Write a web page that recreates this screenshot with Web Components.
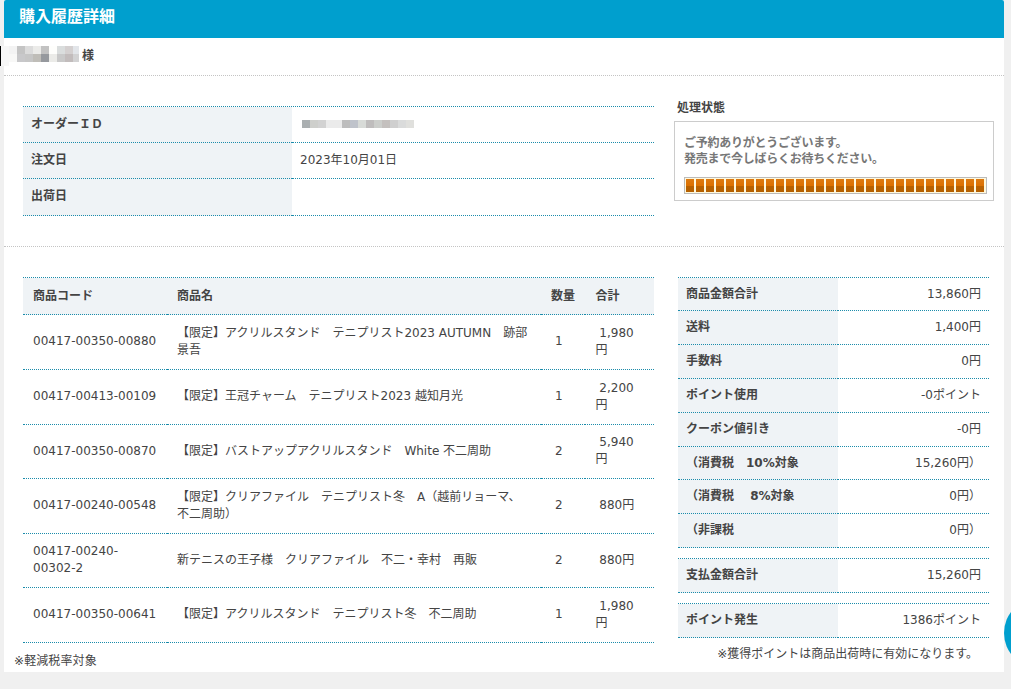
<!DOCTYPE html>
<html lang="ja">
<head>
<meta charset="utf-8">
<title>購入履歴詳細</title>
<style>
    body {
        margin: 0;
        background: #f0f0f0;
        color: #444;
        font: 12px/17px "DejaVu Sans", "Noto Sans CJK JP", sans-serif;
        text-spacing-trim: space-all;
        overflow: hidden;
    }
</style>
</head>
<body>
<history-page>
    <page-title slot="title">購入履歴詳細</page-title>
    <customer-name slot="customer">様</customer-name>

    <info-list slot="order">
        <info-row label="オーダーＩＤ"><pixel-mask size="8" rows="aaafb1 cecfcc d2d2d2 ebebeb ebebeb bdbdbd bfc3cb d8dbd8 bfbdbd cccecb c4c0be cfcfcf dadbdb e0e0dd"></pixel-mask></info-row>
        <info-row label="注文日">2023年10月01日</info-row>
        <info-row label="出荷日" style="--h: 37px; --bottom: 1px"></info-row>
    </info-list>
    <order-status slot="status" heading="処理状態" steps="30">ご予約ありがとうございます。<br>発売まで今しばらくお待ちください。</order-status>

    <item-table slot="items"></item-table>

    <info-list slot="amounts" class="amounts">
        <info-row label="商品金額合計" style="--h: 33px">13,860円</info-row>
        <info-row label="送料">1,400円</info-row>
        <info-row label="手数料">0円</info-row>
        <info-row label="ポイント使用">-0ポイント</info-row>
        <info-row label="クーポン値引き">-0円</info-row>
        <info-row label="（消費税　10%対象" style="--h: 33px">15,260円）</info-row>
        <info-row label="（消費税　&nbsp;8%対象">0円）</info-row>
        <info-row label="（非課税">0円）</info-row>
    </info-list>
    <info-list slot="amounts" class="amounts">
        <info-row label="支払金額合計">15,260円</info-row>
    </info-list>
    <info-list slot="amounts" class="amounts">
        <info-row label="ポイント発生">1386ポイント</info-row>
    </info-list>
    <span slot="tax-note">※軽減税率対象</span>
    <span slot="point-note">※獲得ポイントは商品出荷時に有効になります。</span>
</history-page>

<script>
class BaseElement extends HTMLElement {
    constructor() {
        super();
        this.attachShadow({ mode: 'open' });
    }

    connectedCallback() {
        this.shadowRoot.innerHTML = this.render();
    }
}

class HistoryPage extends BaseElement {
    render() {
        return `
            <style>
                :host {
                    display: block;
                    width: 1011px;
                    height: 689px;
                    position: relative;
                    overflow: hidden;
                }
                main {
                    box-sizing: border-box;
                    width: 1000px;
                    height: 672px;
                    margin-left: 4px;
                    background: #fff;
                    border-radius: 2px 2px 0 0;
                }
                .columns {
                    display: grid;
                    grid-template-columns: 631px 1fr;
                    padding-left: 19px;
                }
                .top {
                    height: 140px;
                    padding-top: 30px;
                    border-bottom: 1px dotted #c4c4c4;
                }
                .bottom { padding-top: 30px; }
                .status { padding-left: 20px; margin-top: -6px; }
                .amounts {
                    display: flex;
                    flex-direction: column;
                    gap: 10px;
                    width: 311px;
                    padding-left: 24px;
                }
                .tax-note { margin: 10px 0 0 -9px; letter-spacing: 0.1px; }
                .point-note { margin-top: -2px; padding-right: 11px; text-align: right; }
                .fab {
                    position: absolute;
                    left: 1004px;
                    top: 598px;
                    width: 70px;
                    height: 70px;
                    border-radius: 50%;
                    background: #009fce;
                }
                .edge {
                    position: absolute;
                    left: 0;
                    top: 46px;
                    width: 8px;
                    height: 20px;
                    border-left: 1px solid #000;
                    background: #f7f7f7;
                }
            </style>
            <main>
                <slot name="title"></slot>
                <slot name="customer"></slot>
                <div class="columns top">
                    <slot name="order"></slot>
                    <div class="status"><slot name="status"></slot></div>
                </div>
                <div class="columns bottom">
                    <div>
                        <slot name="items"></slot>
                        <div class="tax-note"><slot name="tax-note"></slot></div>
                    </div>
                    <div class="amounts">
                        <slot name="amounts"></slot>
                        <div class="point-note"><slot name="point-note"></slot></div>
                    </div>
                </div>
            </main>
            <div class="edge"></div>
            <div class="fab"></div>
        `;
    }
}

class PageTitle extends BaseElement {
    render() {
        return `
            <style>
                :host {
                    display: block;
                    box-sizing: border-box;
                    height: 38px;
                    padding: 5px 15px 0;
                    background: #009fce;
                    border-radius: 2px 2px 0 0;
                    color: #fff;
                    font-size: 16px;
                    font-weight: bold;
                    line-height: 24px;
                }
            </style>
            <slot></slot>
        `;
    }
}

class CustomerName extends BaseElement {
    render() {
        return `
            <style>
                :host {
                    display: flex;
                    align-items: flex-start;
                    box-sizing: border-box;
                    height: 38px;
                    padding: 8px 0 0 5px;
                    border-bottom: 1px dotted #c4c4c4;
                    font-weight: bold;
                }
                pixel-mask { width: 70px; overflow: hidden; }
                span { margin: 2px 0 0 3px; }
            </style>
            <pixel-mask size="8" rows="f3f3f3 c4c4c4 dcdcdc ebebe9 c2c2c2 fefefc dadddd d4d0d0 e2e5e9,f8f8f7 c8c8ca c6c6c6 bfbdb8 96999e ebebe8 c9c9c9 c2bcbc d2d2d3"></pixel-mask>
            <span><slot></slot></span>
        `;
    }
}

// hides personal data behind coloured blocks
class PixelMask extends BaseElement {
    render() {
        const size = Number(this.getAttribute('size'));
        const rows = this.getAttribute('rows').split(',').map(row => row.split(' '));
        const rects = rows.map((row, y) => row.map((color, x) =>
            `<rect x="${x * size}" y="${y * size}" width="${size}" height="${size}" fill="#${color}"/>`
        ).join('')).join('');
        return `
            <style>
                :host { display: block; }
                svg { display: block; }
            </style>
            <svg width="${rows[0].length * size}" height="${rows.length * size}" shape-rendering="crispEdges">${rects}</svg>
        `;
    }
}

class InfoList extends BaseElement {
    render() {
        return `
            <style>
                :host {
                    display: block;
                    border-top: 1px dotted #1b8cab;
                    --label: 269px;
                    --h: 36px;
                }
                :host(.amounts) {
                    --label: 160px;
                    --h: 34px;
                    --align: flex-end;
                }
            </style>
            <slot></slot>
        `;
    }
}

class InfoRow extends BaseElement {
    render() {
        return `
            <style>
                :host {
                    display: grid;
                    grid-template-columns: var(--label) 1fr;
                    height: var(--h);
                }
                div {
                    display: flex;
                    align-items: center;
                    box-sizing: border-box;
                    padding: 0 8px var(--bottom, 0);
                    border-bottom: 1px dotted #1b8cab;
                    white-space: nowrap;
                }
                .label { background: #eff3f6; font-weight: bold; }
                .value { justify-content: var(--align, flex-start); }
                ::slotted(pixel-mask) { margin: 0 0 2px 2px; }
            </style>
            <div class="label">${this.getAttribute('label')}</div>
            <div class="value"><slot></slot></div>
        `;
    }
}

class OrderStatus extends BaseElement {
    render() {
        const steps = '<i></i>'.repeat(Number(this.getAttribute('steps')));
        return `
            <style>
                :host { display: block; }
                h2 {
                    margin: 0 0 4px 3px;
                    font-size: 12px;
                    line-height: 17px;
                }
                .box {
                    box-sizing: border-box;
                    width: 320px;
                    height: 80px;
                    padding: 13px 6px 0 9px;
                    border: 1px solid #ccc;
                }
                p {
                    margin: 0 0 10px;
                    color: #777;
                    font-weight: bold;
                    line-height: 16px;
                    letter-spacing: -0.25px;
                }
                .bar {
                    display: flex;
                    gap: 2px;
                    box-sizing: border-box;
                    width: 303px;
                    height: 17px;
                    padding: 1px;
                    border: 1px solid #bbb;
                    background: #fff8dc;
                }
                i {
                    width: 8px;
                    height: 13px;
                    flex: none;
                    background: linear-gradient(#dd7a10, #dc7000 7px, #b96200 7px, #b66000);
                }
            </style>
            <h2>${this.getAttribute('heading')}</h2>
            <div class="box">
                <p><slot></slot></p>
                <div class="bar">${steps}</div>
            </div>
        `;
    }
}

const items = [
    { code: '00417-00350-00880', name: '【限定】アクリルスタンド　テニプリスト2023 AUTUMN　跡部景吾', count: 1, total: '1,980', height: 55 },
    { code: '00417-00413-00109', name: '【限定】王冠チャーム　テニプリスト2023 越知月光', count: 1, total: '2,200', height: 55 },
    { code: '00417-00350-00870', name: '【限定】バストアップアクリルスタンド　White 不二周助', count: 2, total: '5,940', height: 54 },
    { code: '00417-00240-00548', name: '【限定】クリアファイル　テニプリスト冬　A（越前リョーマ、<br>不二周助）', count: 2, total: '880', height: 55 },
    { code: '00417-00240-00302-2', name: '新テニスの王子様　クリアファイル　不二・幸村　再販', count: 2, total: '880', height: 54 },
    { code: '00417-00350-00641', name: '【限定】アクリルスタンド　テニプリスト冬　不二周助', count: 1, total: '1,980', height: 55 }
];

class ItemTable extends BaseElement {
    render() {
        const rows = items.map(item => `
            <tr style="height: ${item.height}px">
                <td>${item.code}</td>
                <td>${item.name}</td>
                <td class="count">${item.count}</td>
                <td>&nbsp;${item.total}円</td>
            </tr>
        `).join('');
        return `
            <style>
                :host { display: block; }
                table {
                    width: 631px;
                    table-layout: fixed;
                    border-collapse: separate;
                    border-spacing: 0;
                    border-top: 1px dotted #1b8cab;
                }
                th, td {
                    box-sizing: border-box;
                    padding: 0 10px;
                    border-bottom: 1px dotted #1b8cab;
                    text-align: left;
                    vertical-align: middle;
                }
                th { height: 37px; padding-top: 1px; background: #eff3f6; white-space: nowrap; }
                td { padding-bottom: 1px; }
                .code { width: 144px; }
                .count { width: 44px; }
                td.count { padding-left: 14px; }
                .total { width: 69px; }
                th:last-child, td:last-child { padding-left: 10.5px; }
            </style>
            <table>
                <tr>
                    <th class="code">商品コード</th>
                    <th>商品名</th>
                    <th class="count">数量</th>
                    <th class="total">合計</th>
                </tr>
                ${rows}
            </table>
        `;
    }
}

customElements.define('pixel-mask', PixelMask);
customElements.define('page-title', PageTitle);
customElements.define('customer-name', CustomerName);
customElements.define('info-row', InfoRow);
customElements.define('info-list', InfoList);
customElements.define('order-status', OrderStatus);
customElements.define('item-table', ItemTable);
customElements.define('history-page', HistoryPage);
</script>
</body>
</html>
